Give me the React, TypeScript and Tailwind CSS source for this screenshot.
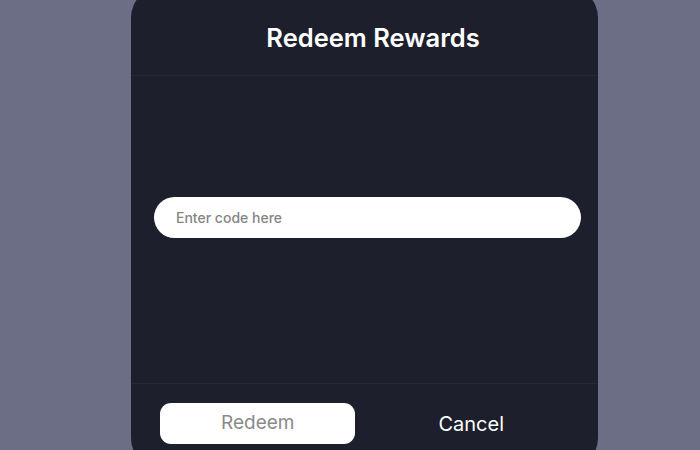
export default function App() {
  return (
    <div
      className="w-[700px] h-[450px] overflow-hidden bg-[#6b6e85]"
      style={{ fontFamily: "Inter, 'Noto Sans', sans-serif" }}
    >
      {/* Dialog */}
      <div className="ml-[131px] mt-[-14px] w-[467px] h-[484px] rounded-[32px] bg-[#1d1f2c] flex flex-col">
        {/* Header */}
        <div className="h-[90px] pt-[36px] pl-[17px] border-b border-[#262837] text-center">
          <h1 className="text-[25.5px] leading-[32px] font-semibold text-white">
            Redeem Rewards
          </h1>
        </div>

        {/* Body */}
        <div className="h-[307px] pt-[121px] pl-[23px] pr-[17px]">
          <input
            type="text"
            placeholder="Enter code here"
            className="w-full h-[41px] rounded-full bg-white px-[22px] text-[14px] font-medium text-[#333] placeholder:text-[#858585] outline-none"
          />
        </div>

        {/* Footer */}
        <div className="border-t border-[#262837] px-5 pt-[19px] grid grid-cols-2">
          <div className="flex justify-center">
            <button className="w-[195px] h-[41px] rounded-[11px] bg-white text-[19px] text-[#8a8a8a]">
              Redeem
            </button>
          </div>
          <div className="flex justify-center">
            <button className="h-[41px] text-[20px] text-white">Cancel</button>
          </div>
        </div>
      </div>
    </div>
  );
}
